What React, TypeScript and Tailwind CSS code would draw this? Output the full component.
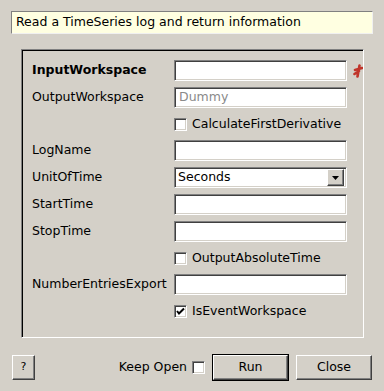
const sunken =
  "border border-t-[#808080] border-l-[#808080] border-b-white border-r-white shadow-[inset_1px_1px_0_#404040,inset_-1px_-1px_0_#d4d0c8]";
const raised =
  "border border-t-white border-l-white border-b-[#404040] border-r-[#404040] shadow-[inset_-1px_-1px_0_#808080]";

function TextField({ placeholder }: { placeholder?: string }) {
  return (
    <div className={`w-[173px] h-[21px] bg-white flex items-center px-[4px] ${sunken}`}>
      {placeholder && <span className="text-[#8a8a8a]">{placeholder}</span>}
    </div>
  );
}

function Check({ checked }: { checked?: boolean }) {
  return (
    <div className={`w-[13px] h-[13px] bg-white flex items-center justify-center ${sunken}`}>
      {checked && (
        <svg width="9" height="9" viewBox="0 0 9 9">
          <path d="M1 4 L3 6.5 L8 1.5" fill="none" stroke="#000" strokeWidth="2" />
        </svg>
      )}
    </div>
  );
}

function Row({ label, bold, children }: { label?: string; bold?: boolean; children: React.ReactNode }) {
  return (
    <div className="flex items-center">
      <div className={`w-[142px] ${bold ? "font-bold" : ""}`}>{label}</div>
      {children}
    </div>
  );
}

function CheckRow({ label, checked }: { label: string; checked?: boolean }) {
  return (
    <div className="flex items-center h-[20px] pl-[142px] gap-[5px]">
      <Check checked={checked} />
      <span>{label}</span>
    </div>
  );
}

export default function App() {
  return (
    <div
      className="w-[384px] h-[391px] bg-[#d4d0c8] text-[12.5px] text-black flex flex-col"
      style={{ fontFamily: '"DejaVu Sans", sans-serif' }}
    >
      <div className="mt-[11px] mx-[11px] h-[23px] bg-[#ffffe1] border border-t-[#808080] border-l-[#808080] border-b-[#f0f0f0] border-r-[#f0f0f0] flex items-center px-[4px]">
        Read a TimeSeries log and return information
      </div>

      <div className="mt-[15px] ml-[21px] w-[343px] h-[289px] border border-t-[#808080] border-l-[#808080] border-b-white border-r-white shadow-[inset_1px_1px_0_#000]">
        <div className="pt-[10px] pl-[10px] flex flex-col gap-[6px]">
          <Row label="InputWorkspace" bold>
            <TextField />
            <svg className="ml-[6px]" width="10" height="14" viewBox="0 0 10 14">
              <path d="M2 6 L9 4 M6.5 1.5 L4.5 12.5 M1.5 10 L6 7" stroke="#c0352b" strokeWidth="2.6" strokeLinecap="round" fill="none" />
            </svg>
          </Row>
          <Row label="OutputWorkspace">
            <TextField placeholder="Dummy" />
          </Row>
          <CheckRow label="CalculateFirstDerivative" />
          <Row label="LogName">
            <TextField />
          </Row>
          <Row label="UnitOfTime">
            <div className={`w-[173px] h-[21px] bg-white flex items-center pl-[3px] pr-[2px] ${sunken}`}>
              <span className="flex-1">Seconds</span>
              <div className={`w-[17px] h-[17px] bg-[#d4d0c8] flex items-center justify-center ${raised}`}>
                <svg width="7" height="4" viewBox="0 0 7 4">
                  <path d="M0 0 H7 L3.5 4 Z" fill="#000" />
                </svg>
              </div>
            </div>
          </Row>
          <Row label="StartTime">
            <TextField />
          </Row>
          <Row label="StopTime">
            <TextField />
          </Row>
          <CheckRow label="OutputAbsoluteTime" />
          <Row label="NumberEntriesExport">
            <TextField />
          </Row>
          <CheckRow label="IsEventWorkspace" checked />
        </div>
      </div>

      <div className="mt-[16px] mx-[12px] flex items-center">
        <button className={`w-[23px] h-[25px] bg-[#d4d0c8] text-[11px] ${raised}`}>?</button>
        <div className="flex-1" />
        <span>Keep Open</span>
        <div className="ml-[5px]">
          <Check />
        </div>
        <div className="ml-[7px] border border-black">
          <button className={`w-[75px] h-[25px] bg-[#d4d0c8] ${raised}`}>Run</button>
        </div>
        <button className={`ml-[7px] w-[76px] h-[25px] bg-[#d4d0c8] ${raised}`}>Close</button>
      </div>
    </div>
  );
}
